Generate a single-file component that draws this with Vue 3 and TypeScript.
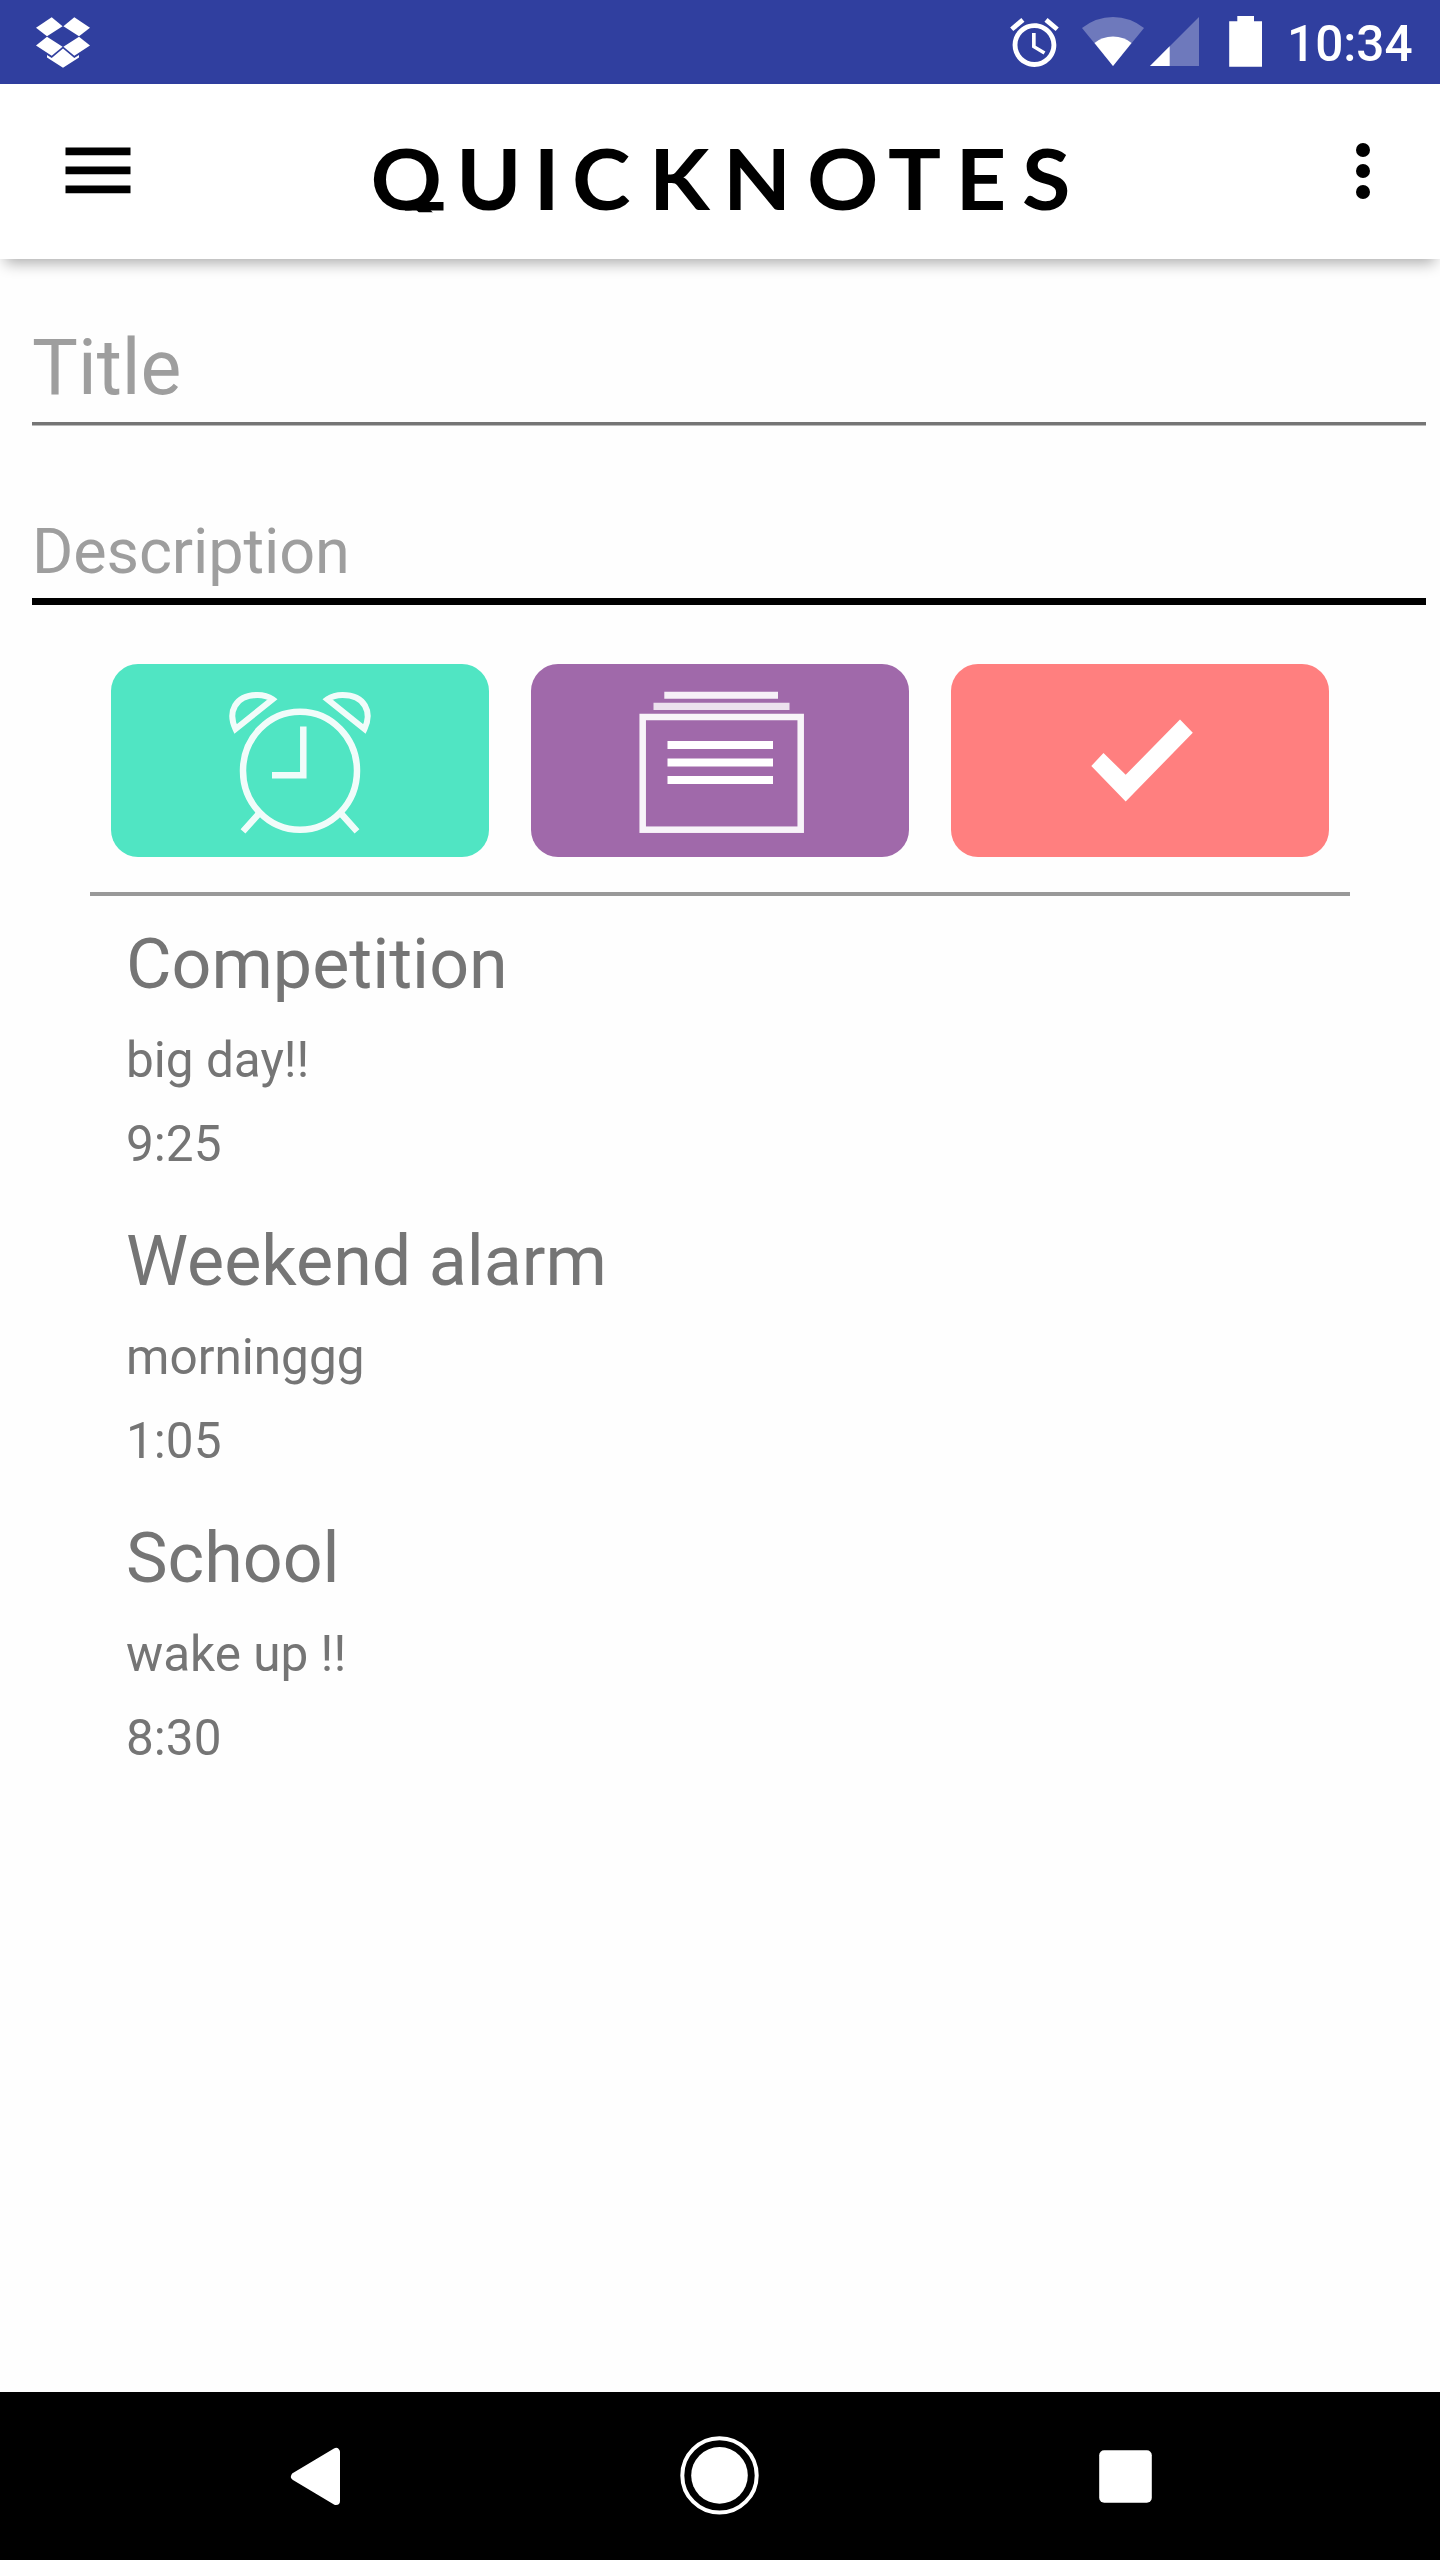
<script setup lang="ts">
interface Note {
  title: string
  description: string
  time: string
}

const notes: Note[] = [
  { title: 'Competition', description: 'big day!!', time: '9:25' },
  { title: 'Weekend alarm', description: 'morninggg', time: '1:05' },
  { title: 'School', description: 'wake up !!', time: '8:30' },
]

// The wordmark is stretched horizontally; glyph origins are given in page pixels.
const stretch = 1.04
const glyphX = [370.5, 456, 533.5, 572, 649, 723, 807, 888, 955.5, 1022]
  .map((x) => (x / stretch).toFixed(2))
  .join(' ')
</script>

<template>
  <div class="screen">
    <div class="status">
      <svg class="dropbox" width="54" height="51" viewBox="0 0 54 51" fill="#fff">
        <path d="M15.7 0.3 26.6 9.3 11 19.3 0 10.7z" />
        <path d="M38.3 0.3 27.4 9.3 43 19.3 54 10.7z" />
        <path d="M11 19.8 26.6 29.8 15.7 38.8 0 28.4z" />
        <path d="M43 19.8 27.4 29.8 38.3 38.8 54 28.4z" />
        <path d="M27 31.6 38.3 41 43 38 43 40.4 27 50.7 11 40.4 11 38 15.7 41z" />
      </svg>
      <svg class="status-icons" width="264" height="84" viewBox="1005 0 264 84" fill="#fff">
        <g transform="translate(1005.3 13.5) scale(2.43)">
          <path d="M22 5.72l-4.6-3.86-1.29 1.53 4.6 3.86L22 5.72zM7.88 3.39L6.6 1.86 2 5.71l1.29 1.53 4.59-3.85zM12.5 8H11v6l4.75 2.85.75-1.23-4-2.37V8zM12 4c-4.97 0-9 4.03-9 9s4.02 9 9 9c4.97 0 9-4.03 9-9s-4.03-9-9-9zm0 16c-3.87 0-7-3.13-7-7s3.13-7 7-7 7 3.13 7 7-3.13 7-7 7z" />
        </g>
        <path d="M1113 66 1082 28Q1096 17 1113 17T1144 28z" opacity=".3" />
        <path d="M1113 66 1094.5 43Q1102 36.5 1113 36.5T1131.5 43z" />
        <path d="M1150 66H1199V17z" opacity=".3" />
        <path d="M1150 66H1169.700V46.300z" />
        <path d="M1229.200 21.300H1237.300V16H1254V21.300H1262V66.700H1229.200z" />
      </svg>
      <span class="clock">10:34</span>
    </div>

    <header class="toolbar">
      <svg class="menu" width="66" height="48" viewBox="0 0 66 48">
        <path d="M.500 .600h65v7.700h-65zM.500 19.600h65v7.700h-65zM.500 38.500h65v7.700h-65z" />
      </svg>
      <svg class="logo" width="720" height="150" viewBox="360 100 720 150">
        <text :transform="`scale(${stretch} 1)`" y="210.300" :x="glyphX">QUICKNOTES</text>
        <path d="M366 212.300H450V232H366z" fill="#fff" />
        <path d="M405 202H443.500V210.600H405z" />
      </svg>
      <svg class="more" width="14" height="56" viewBox="0 0 14 56">
        <circle cx="7" cy="7" r="7" /><circle cx="7" cy="28" r="7" /><circle cx="7" cy="49" r="7" />
      </svg>
    </header>

    <main class="content">
      <div class="field title-field">Title</div>
      <div class="field desc-field">Description</div>

      <div class="actions">
        <button class="action alarm" aria-label="Alarm">
          <svg width="378" height="193" viewBox="111 664 378 193" fill="none" stroke="#fff" stroke-width="6.500">
            <g opacity=".92">
              <ellipse cx="300" cy="770.800" rx="57" ry="59" />
              <path d="M303.300 726.500V775.300H272" />
              <path d="M259 813.500 243 831.300M341 813.500 357 831.300" />
              <path d="M235.500 729C227.500 712 235 695 257.500 695C263.500 695 268.500 696.500 272.500 699.300Z" stroke-width="6" />
              <path d="M364.500 729C372.500 712 365 695 342.500 695C336.500 695 331.500 696.500 327.500 699.300Z" stroke-width="6" />
            </g>
          </svg>
        </button>
        <button class="action cards" aria-label="Notes">
          <svg width="378" height="193" viewBox="531 664 378 193" fill="#fff">
            <path d="M664.300 691.800h113.700v7H664.300z" opacity=".9" />
            <path d="M653.500 702.700h136v7.300H653.500z" opacity=".8" />
            <rect x="642.700" y="717" width="158" height="112.700" fill="none" stroke="#fff" stroke-width="6.500" opacity=".93" />
            <path d="M667.500 741h105.500v8H667.500zM667.500 758.500h105.500v8H667.500zM667.500 776h105.500v8H667.500z" />
          </svg>
        </button>
        <button class="action done" aria-label="Done">
          <svg width="378" height="193" viewBox="951 664 378 193" fill="#fff">
            <path d="M1103.500 753 1125.700 774.800 1180 719.500 1192.800 732.700 1125.700 801.500 1091.300 766z" />
          </svg>
        </button>
      </div>

      <ul class="notes">
        <li v-for="note in notes" :key="note.title" class="note">
          <div class="note-title">{{ note.title }}</div>
          <div class="note-line">{{ note.description }}</div>
          <div class="note-line">{{ note.time }}</div>
        </li>
      </ul>
    </main>

    <nav class="navbar">
      <svg width="1440" height="168" viewBox="0 2392 1440 168" fill="#fff">
        <path d="M295 2476.500 336 2452V2501z" stroke="#fff" stroke-width="8" stroke-linejoin="round" />
        <circle cx="719.500" cy="2475.400" r="28.300" />
        <circle cx="719.500" cy="2475.400" r="37.200" fill="none" stroke="#fff" stroke-width="4" />
        <rect x="1099.200" y="2450.200" width="52.600" height="52.600" rx="5" />
      </svg>
    </nav>
  </div>
</template>

<style>
body {
  margin: 0;
  background: #fefefe;
}
</style>

<style scoped>
.screen {
  display: flex;
  flex-direction: column;
  width: 1440px;
  height: 2560px;
  overflow: hidden;
  background: #fefefe;
  font-family: Roboto, sans-serif;
}
.screen svg {
  display: block;
  flex: none;
}
.status {
  display: flex;
  height: 84px;
  flex: none;
  background: #303f9f;
}
.dropbox {
  margin: 17px 0 0 36px;
}
.status-icons {
  margin-left: 915px;
}
.clock {
  margin-left: 18px;
  padding-top: 15px;
  color: #fff;
  font-size: 49.500px;
  font-weight: 500;
  line-height: 58px;
}
.toolbar {
  display: flex;
  height: 175px;
  flex: none;
  background: #fff;
  box-shadow: 0 9px 14px -5px rgba(0, 0, 0, 0.33);
}
.menu {
  margin: 63px 0 0 65px;
}
.logo {
  margin: 16px 0 0 229px;
}
.logo text {
  font-family: Lato, sans-serif;
  font-size: 85px;
  font-weight: 700;
}
.more {
  margin: 59px 0 0 276px;
}
.content {
  flex: 1;
  display: flex;
  flex-direction: column;
}
.field {
  margin: 0 14px 0 32px;
  color: #9e9e9e;
}
.title-field {
  margin-top: 59px;
  height: 104px;
  border-bottom: 3px solid #757575;
  box-shadow: 0 1px 0 #bababa;
  font-size: 77px;
  line-height: 100px;
}
.desc-field {
  margin-top: 87px;
  height: 86px;
  border-bottom: 7px solid #000;
  font-size: 63px;
  letter-spacing: -0.120px;
  line-height: 80px;
}
.actions {
  display: flex;
  gap: 42px;
  margin: 59px 90px 0;
  padding: 0 21px 35px;
  border-bottom: 4px solid #999;
}
.action {
  width: 378px;
  height: 193px;
  padding: 0;
  border: 0;
  border-radius: 27px;
}
.alarm {
  background: #50e5c3;
}
.cards {
  background: #a069aa;
}
.done {
  background: #ff7f7f;
}
.notes {
  display: flex;
  flex-direction: column;
  gap: 47px;
  margin: 27px 0 0 126px;
  padding: 0;
  list-style: none;
  color: #757575;
}
.note {
  display: flex;
  flex-direction: column;
  gap: 26px;
}
.note-title {
  font-size: 70px;
  line-height: 82px;
}
.note-line {
  font-size: 49.500px;
  line-height: 58px;
}
.navbar {
  flex: none;
  height: 168px;
  background: #000;
}
</style>
